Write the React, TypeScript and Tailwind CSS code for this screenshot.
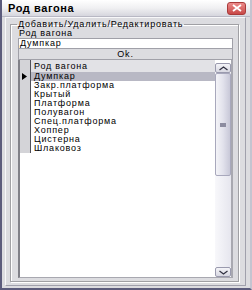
const rows = [
  "Думпкар",
  "Закр.платформа",
  "Крытый",
  "Платформа",
  "Полувагон",
  "Спец.платформа",
  "Хоппер",
  "Цистерна",
  "Шлаковоз",
];

const font = { fontFamily: '"Liberation Sans", Arial, sans-serif' };

const ScrollButton = ({ up }: { up: boolean }) => (
  <div className="h-[10px] rounded-[2px] border border-[#9a9aae] bg-gradient-to-b from-[#f4f4f8] to-[#d8d8e2] flex items-center justify-center">
    <svg width="9" height="5" viewBox="0 0 9 5">
      <path
        d={up ? "M0.5 4 L4.5 1 L8.5 4" : "M0.5 1 L4.5 4 L8.5 1"}
        fill="none"
        stroke="#303040"
        strokeWidth="1.2"
      />
    </svg>
  </div>
);

export default function App() {
  return (
    <div
      className="w-[252px] h-[290px] flex flex-col bg-[#dcdce0] border-l-2 border-b-2 border-r-2 border-l-[#5c5c7c] border-b-[#5c5c7c] border-r-[#c4c4d0] text-black text-[9px] leading-none"
      style={font}
    >
      {/* title bar */}
      <div className="h-[17px] shrink-0 flex items-center pl-[6px] pr-[4px] bg-gradient-to-b from-[#ffffff] via-[#f0f0f2] to-[#d6d6de] border-b border-[#b8b8c4]">
        <span className="flex-1 text-[11px] font-bold tracking-[0.6px]">
          Род вагона
        </span>
        <div className="w-[19px] h-[13px] rounded-[3px] border border-[#a83a3a] bg-gradient-to-b from-[#ec8a8a] to-[#c84848] flex items-center justify-center">
          <svg width="10" height="8" viewBox="0 0 10 8">
            <path d="M1 1 L9 7 M9 1 L1 7" stroke="#fff" strokeWidth="1.8" />
          </svg>
        </div>
      </div>

      {/* body */}
      <div className="flex-1 flex pl-[3px] pr-[4px] pb-[2px]">
        <div className="flex-1 flex border-l border-t border-r border-b border-l-[#f8f8fa] border-t-[#f8f8fa] border-r-[#a0a0ac] border-b-[#a0a0ac] pl-[4px] pr-[6px] pt-[1px] pb-[3px]">
          <fieldset className="flex-1 min-w-0 flex flex-col border border-[#a0a0a4] shadow-[inset_1px_1px_0_#ffffff,1px_1px_0_#ffffff] pl-[7px] pr-[5px] pb-[3px]">
            <legend className="ml-[-1px] px-[1px] h-[10px] leading-[10px] tracking-[0.8px]">
              Добавить/Удалить/Редактировать
            </legend>
            <div className="h-[9px] leading-[9px] pl-[1px] tracking-[0.8px]">
              Род вагона
            </div>
            <div className="h-[11px] border border-[#a0a0a8] bg-white leading-[9px] pl-[1px] tracking-[0.8px]">
              Думпкар
            </div>
            <div className="h-[11px] border-x border-b border-[#a0a0a8] bg-[#dcdce0] leading-[10px] text-center tracking-[0.8px]">
              Ok.
            </div>

            {/* grid */}
            <div className="flex-1 flex border-l-2 border-r-2 border-b border-l-[#808088] border-r-[#a8a8b0] border-b-[#a8a8b0] bg-white">
              <div className="flex-1 flex flex-col">
                <div className="h-[12px] flex bg-[#e2e2e6]">
                  <div className="w-[11px] border-r border-[#505058] bg-[#d4d4d8]" />
                  <div className="flex-1 pl-[3px] leading-[12px] tracking-[0.8px]">
                    Род вагона
                  </div>
                </div>
                {rows.map((r, i) => (
                  <div key={r} className="h-[9px] flex">
                    <div className="w-[11px] border-r border-[#505058] bg-[#d4d4d8] flex items-center pl-[2px]">
                      {i === 0 && (
                        <svg width="5" height="7" viewBox="0 0 5 7">
                          <path d="M0 0 L5 3.5 L0 7 Z" fill="#000" />
                        </svg>
                      )}
                    </div>
                    <div
                      className={
                        i === 0
                          ? "flex-1 pl-[3px] leading-[9px] tracking-[0.8px] bg-[#b8b8c4]"
                          : "flex-1 pl-[3px] leading-[9px] tracking-[0.8px]"
                      }
                    >
                      {r}
                    </div>
                  </div>
                ))}
              </div>

              {/* scrollbar */}
              <div className="w-[16px] flex flex-col pt-[3px] bg-white">
                <ScrollButton up />
                <div className="flex-1 flex flex-col bg-gradient-to-r from-[#f8f8fb] to-[#e6e6ee]">
                  <div className="h-[103px] rounded-[2px] border border-[#a8a8bc] bg-gradient-to-r from-[#f4f4f8] via-[#e2e2ec] to-[#c8c8d8] flex items-center justify-center">
                    <div className="w-[6px] h-[4px] bg-[#8c8ca0]" />
                  </div>
                </div>
                <ScrollButton up={false} />
              </div>
            </div>
          </fieldset>
        </div>
      </div>
    </div>
  );
}
